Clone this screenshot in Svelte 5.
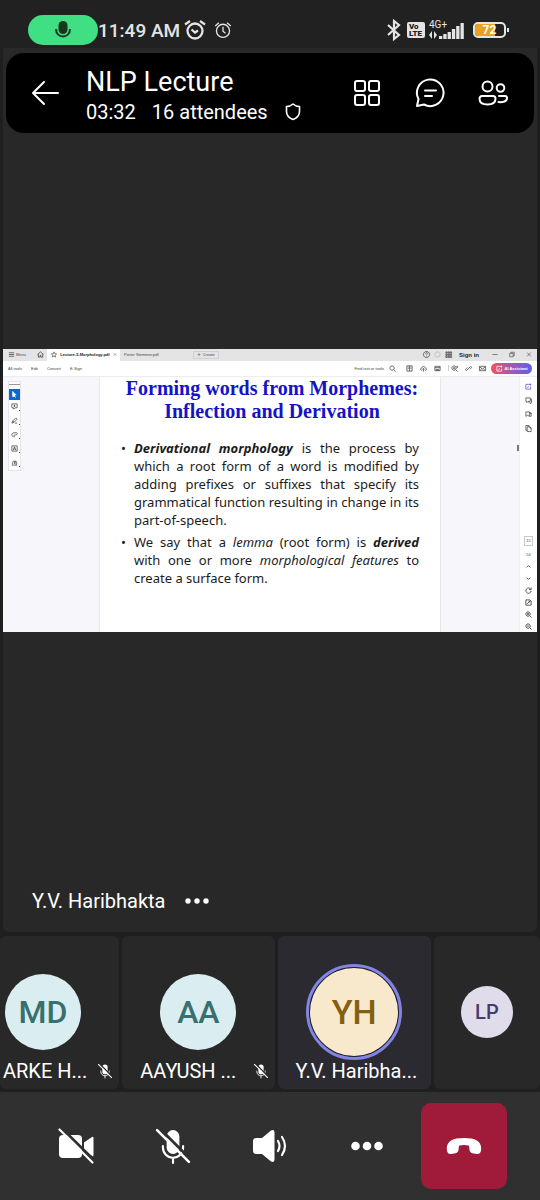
<script>
  const leftMenu = ['All tools', 'Edit', 'Convert', 'E-Sign'];
  const palette = ['comment', 'pen', 'loop', 'textbox', 'stamp'];
  const railTop = ['spark', 'chats', 'bookmark', 'pages'];
  const railBottom = ['up', 'down', 'rotate', 'fit', 'zoomin', 'zoomout'];
  const bars = [3, 5, 7, 10, 13, 16];

  const tiny = {
    menu: 'M2 4h12M2 8h12M2 12h12',
    home: 'M1 8 8 2l7 6M3 7v7h4v-4h2v4h4V7',
    star: 'M8 1l2 5 5 .4-4 3.4 1.300 5L8 12l-4.300 2.800 1.300-5-4-3.400 5-.4z',
    close: 'M3 3l10 10M13 3 3 13',
    plus: 'M8 2v12M2 8h12',
    help: 'M8 1a7 7 0 1 0 .01 0zM6 6c0-3 4-3 4-.5S8 8 8 9.500M8 11v1.500',
    bell: 'M8 2a6 6 0 1 0 .01 0z',
    apps: 'M2 2h3v3H2zM7 2h3v3H7zM12 2h3v3h-3zM2 7h3v3H2zM7 7h3v3H7zM12 7h3v3h-3zM2 12h3v3H2zM7 12h3v3H7zM12 12h3v3h-3z',
    minus: 'M1 8h14',
    restore: 'M2 5h9v9H2zM5 5V2h9v9h-3',
    search: 'M7 2a5 5 0 1 0 .01 0zM11 11l4 4',
    save: 'M2 2h12v12H2zM8 2v12M4 5h2M4 8h2M10 5h2M10 8h2',
    cloud: 'M5 12H3C0 11 1 7 4 7c0-5 8-5 8 0 4 0 4 5 1 5h-2M8 15V8M5.500 10 8 7.500 10.500 10',
    print: 'M2 3h12v10H2zM2 6h12M4 10h8M4 12h8',
    find: 'M7 2a5 5 0 1 0 .01 0zM7 5v5M5 7h5M11 11l4 4M12 3h3v4',
    link: 'M7 9 4 12c-2 2-4-1-2-3l3-3M9 7l3-3c2-2 4 1 2 3l-3 3M6 10l4-4',
    mail: 'M1 3h14v10H1zM1 4l7 5 7-5M3 12l3-4M13 12l-3-4',
    spark: 'M9 3H2v11h11V8M5 11l4-3M12 1v5M9.500 3.500h5',
    chats: 'M2 2h10v8H7l-3 3v-3H2zM12 5h3v8h-2v2l-3-2H8',
    bookmark: 'M2 2h8v10l-4-2-4 2zM10 4h4v8h-4M12 6h3',
    pages: 'M5 4h6l3 3v8H5zM11 4v3h3M5 12H2V1h7v3',
    comment: 'M2 2h12v9H9l-3 3v-3H2zM8 4v5M6 6.500h4',
    pen: 'M2 14l2-5 7-7 3 3-7 7zM4 9l3 3M9 14h5',
    loop: 'M5 12c-5 0-4-8 2-8h5c4 0 3 5-2 5-4 0-6 5-1 4',
    textbox: 'M2 2h12v12H2zM5 12l3-8 3 8M6 9h4',
    stamp: 'M2 14h12M3 13c0-4 2-9 4-9s2 5 0 7M9 12V5c4-1 5 3 2 4 4 0 3 4 0 4',
    up: 'M4 10l4-4 4 4',
    down: 'M4 6l4 4 4-4',
    rotate: 'M13 5a6 6 0 1 0 1 4M14 1v5H9',
    fit: 'M2 2h9l3 3v9H2zM5 11l6-6M8 5h3v3',
    zoomin: 'M7 2a5 5 0 1 0 .01 0zM11 11l4 4M7 4.500v5M4.500 7h5',
    zoomout: 'M7 2a5 5 0 1 0 .01 0zM11 11l4 4M4.500 7h5'
  };
</script>

{#snippet t(name)}
  <svg class="t" viewBox="0 0 16 16" aria-hidden="true"><path d={tiny[name]} /></svg>
{/snippet}

{#snippet mutedMic()}
  <svg viewBox="0 0 32 32" aria-hidden="true">
    <path class="fill" d="M10 7a6 6 0 0 1 12 0v10.500a6 6 0 0 1-12 0z" />
    <path d="M6.500 16v1.500a9.500 9.500 0 0 0 19 0V16M16 27v5" stroke-width="2" />
    <path class="cut" d="M3 -1 33 29" />
    <path d="M1 1 31 31" stroke-width="2.400" />
  </svg>
{/snippet}

<div class="app">
  <div class="status">
    <span class="pill">
      <svg width="20" height="20" viewBox="0 0 20 20"><rect x="5.500" y="1" width="9" height="13" rx="4.500" fill="#17351f" /><path d="M3 9c0 10 14 10 14 0" fill="none" stroke="#17351f" stroke-width="2" /></svg>
    </span>
    <span class="time">11:49 AM</span>
    <svg class="alarm" width="22" height="22" viewBox="0 0 22 22"><circle cx="11" cy="12" r="7.500" stroke-width="2.300" /><path d="M1 5.500 6 2M21 5.500 16 2M7.500 10.500l3.500 3 3-2" stroke-width="2.200" /></svg>
    <svg class="alarm thin" width="18" height="18" viewBox="0 0 22 22"><circle cx="11" cy="12" r="8" /><path d="M1.500 6 6 2M20.500 6 16 2M11 7v5.500l3 2.500" /></svg>
    <span class="grow"></span>
    <svg class="bt" width="14" height="20" viewBox="0 0 14 20"><path d="M1 5l11 10-5 4V1l5 4L1 15" /></svg>
    <span class="volte"><span>Vo</span><span>LTE</span></span>
    <span class="signal">
      <small>4G+</small>
      <svg width="36" height="17" viewBox="0 0 36 17">
        <path d="M0 13l3-4v8M8 13l-3 4V9" fill="#e4e4e4" />
        {#each bars as h, i}<rect x={10 + i * 4.300} y={17 - h} width="3.300" height={h} fill="#e4e4e4" />{/each}
      </svg>
    </span>
    <span class="battery"><span>72</span></span>
  </div>

  <main class="stage">
    <header>
      <button class="back" aria-label="Back"><svg width="28" height="26" viewBox="0 0 28 26"><path d="M26 13H1M12 2 1 13l11 11" /></svg></button>
      <div class="heading">
        <h1>NLP Lecture</h1>
        <p><span>03:32</span><span>16 attendees</span>
          <svg width="18" height="20" viewBox="0 0 18 20"><path d="M9 2c2 1.800 4 2.500 6.500 2.500v5c0 4.500-2.500 6.500-6.500 8-4-1.500-6.500-3.500-6.500-8v-5C5 4.500 7 3.800 9 2z" /></svg>
        </p>
      </div>
      <nav>
        <button aria-label="Gallery view"><svg width="30" height="30" viewBox="0 0 30 30"><rect x="3" y="3" width="10" height="10" rx="2" /><rect x="17" y="3" width="10" height="10" rx="2" /><rect x="3" y="17" width="10" height="10" rx="2" /><rect x="17" y="17" width="10" height="10" rx="2" /></svg></button>
        <button aria-label="Chat"><svg width="30" height="30" viewBox="0 0 30 30"><path d="M2 28l1.500-7A13.300 13.300 0 1 1 9 26.500zM10 12.500h11M10 18h7" /></svg></button>
        <button aria-label="People"><svg width="30" height="30" viewBox="0 0 30 30"><circle cx="9.500" cy="8.500" r="5" /><circle cx="22.500" cy="10" r="3.800" /><path d="M4 18h11a2.500 2.500 0 0 1 2.500 2.500c0 4-3.500 6-8 6s-8-2-8-6A2.500 2.500 0 0 1 4 18zM21 18h6a2 2 0 0 1 2 2c0 3.500-4 4.500-8.500 4" /></svg></button>
      </nav>
    </header>

    <section class="screen">
      <div class="tabs">
        <span class="menu">{@render t('menu')} Menu</span>
        {@render t('home')}
        <span class="tab">{@render t('star')}<b>Lecture-5-Morphology.pdf</b>{@render t('close')}</span>
        <span class="tab2">Porter Stemmer.pdf</span>
        <span class="create">{@render t('plus')} Create</span>
        <span class="grow"></span>
        <span class="win">{@render t('help')}{@render t('bell')}{@render t('apps')}<b>Sign in</b></span>
        <span class="ctl">{@render t('minus')}{@render t('restore')}{@render t('close')}</span>
      </div>
      <div class="tools">
        {#each leftMenu as m}<span>{m}</span>{/each}
        <span class="grow"></span>
        <span>Find text or tools</span>
        <span class="acts">{@render t('search')}<i></i>{@render t('save')}{@render t('cloud')}{@render t('print')}<u></u>{@render t('find')}{@render t('link')}{@render t('mail')}</span>
        <span class="ai">{@render t('spark')} AI Assistant</span>
      </div>
      <div class="doc">
        <div class="side">
          <div class="palette">
            <hr />
            <span class="sel"><svg viewBox="0 0 12 12" width="9" height="9"><path d="M3 1l6 6H6.500L8 11 6 9 3 9z" fill="#fff" /></svg></span>
            {#each palette as p}<span class="cell">{@render t(p)}</span>{/each}
          </div>
        </div>
        <article>
          <h2>Forming words from Morphemes:<br />Inflection and Derivation</h2>
          <ul>
            <li>
              <span class="ln"><b><em>Derivational morphology</em></b> is the process by</span>
              <span class="ln">which a root form of a word is modified by</span>
              <span class="ln">adding prefixes or suffixes that specify its</span>
              <span class="ln">grammatical function resulting in change in its</span>
              <span class="ln end">part-of-speech.</span>
            </li>
            <li>
              <span class="ln">We say that a <em>lemma</em> (root form) is <b><em>derived</em></b></span>
              <span class="ln">with one or more <em>morphological features</em> to</span>
              <span class="ln end">create a surface form.</span>
            </li>
          </ul>
        </article>
        <div class="gutter"><i></i></div>
        <div class="rail">
          <div class="top">{#each railTop as r}{@render t(r)}{/each}</div>
          <div class="bottom"><span class="pg">15</span><span>54</span>{#each railBottom as r}{@render t(r)}{/each}</div>
        </div>
      </div>
    </section>

    <div class="presenter">
      <span>Y.V. Haribhakta</span>
      <button aria-label="More about presenter"><svg width="24" height="8" viewBox="0 0 24 8"><circle cx="3" cy="4" r="2.700" /><circle cx="12" cy="4" r="2.700" /><circle cx="21" cy="4" r="2.700" /></svg></button>
    </div>
  </main>

  <div class="strip">
    <div class="tile first"><div class="ring"><span class="avatar teal">MD</span></div><div class="label"><span>ARKE H...</span>{@render mutedMic()}</div></div>
    <div class="tile"><div class="ring"><span class="avatar teal">AA</span></div><div class="label"><span>AAYUSH ...</span>{@render mutedMic()}</div></div>
    <div class="tile active"><div class="ring on"><span class="avatar gold">YH</span></div><div class="label"><span>Y.V. Haribha...</span></div></div>
    <div class="tile"><div class="ring"><span class="avatar small">LP</span></div></div>
  </div>

  <footer>
    <button aria-label="Turn camera on">
      <svg width="36" height="36" viewBox="0 0 36 36"><rect class="fill" x="1" y="7" width="23" height="23" rx="4" /><path class="fill" d="M26 14.500l8-5.500q1.500-.8 1.500 1v17q0 1.800-1.500 1l-8-5.500z" /><path class="cut" d="M3.500 0 37 33" /><path d="M1.500 1.500 34.500 34.500" stroke-width="2.200" /></svg>
    </button>
    <button aria-label="Unmute"><span class="mic">{@render mutedMic()}</span></button>
    <button aria-label="Speaker">
      <svg width="36" height="32" viewBox="0 0 36 32"><path class="fill" d="M1 11.500q0-3.500 3.500-3.500H10l9-7.500Q22.500-1 22.500 2.500v27q0 3.500-3.500 2L10 24H4.500Q1 24 1 20.500z" /><path d="M26 11q3 5 0 10M30 7q6 9 0 18" stroke-width="2.200" /></svg>
    </button>
    <button aria-label="More options"><svg width="32" height="10" viewBox="0 0 32 10"><circle class="fill" cx="4.500" cy="5" r="4.300" /><circle class="fill" cx="16" cy="5" r="4.300" /><circle class="fill" cx="27.500" cy="5" r="4.300" /></svg></button>
    <button class="end" aria-label="Leave call">
      <svg width="36" height="18" viewBox="0 0 36 18"><path class="fill" d="M18 1C29 1 35.500 4 35.200 12c-.2 4-1.700 5.500-4.700 5l-4-.7c-2-.4-2.800-1.500-3-3.500l-.5-4c-3-1-7-1-10 0l-.5 4c-.2 2-1 3.100-3 3.500l-4 .7c-3 .5-4.500-1-4.700-5C.5 4 7 1 18 1z" /></svg>
    </button>
  </footer>
</div>

<style>
  :global(body) { margin: 0; background: #1f1f1f; }
  .app { min-height: 100vh; display: flex; flex-direction: column; font-family: Roboto, sans-serif; color: #fff; overflow: hidden; }
  .app :global(*) { box-sizing: border-box; }
  svg { display: block; flex: none; overflow: visible; }
  button { background: none; border: 0; padding: 0; color: inherit; font: inherit; display: flex; align-items: center; justify-content: center; }
  h1, h2, p, ul { margin: 0; padding: 0; font-weight: 400; }
  .grow { flex: 1; }

  .status { height: 48px; padding: 12px 31px 0 28px; display: flex; align-items: center; background: #212121; color: #e4e4e4; }
  .pill { width: 70px; height: 30px; border-radius: 15px; background: #40df84; display: grid; place-items: center; }
  .time { font-size: 19px; font-weight: 500; white-space: nowrap; }
  .alarm { margin-left: 4px; fill: none; stroke: #e4e4e4; }
  .thin { margin-left: 8px; stroke-width: 1.600; }
  .bt { fill: none; stroke: #e4e4e4; stroke-width: 2.200; }
  .volte { width: 18px; height: 16px; margin: 0 4px 0 6px; border-radius: 2px; background: #e4e4e4; color: #212121; font-size: 8px; line-height: 7px; font-weight: 900; padding: 1px 2px; display: flex; flex-direction: column; }
  .signal { position: relative; }
  .signal small { position: absolute; left: 0; top: -2px; font-size: 10px; line-height: 10px; }
  .battery { position: relative; width: 33px; height: 16px; margin: 0 3px 0 8px; border: 2px solid #e4e4e4; border-radius: 5px; font-size: 12px; line-height: 12px; font-weight: 700; text-align: center; color: #fff; background: linear-gradient(90deg, #eca01f 70%, #212121 70%); background-clip: padding-box; }
  .battery::after { content: ''; position: absolute; right: -5px; top: 4px; width: 2px; height: 4px; background: #e4e4e4; }

  .stage { flex: 1; margin: 0 3px; background: #282828; border-radius: 0 0 6px 6px; display: grid; grid-template-rows: 1fr auto 1fr; }
  header { margin: 5px 3px 0; height: 80px; padding: 0 26px; background: #000; border-radius: 18px; display: flex; align-items: center; align-self: start; }
  header svg { fill: none; stroke: #fff; stroke-width: 2; stroke-linecap: round; stroke-linejoin: round; }
  .heading { flex: 1; margin-left: 26px; padding-top: 5px; }
  h1 { font-size: 27px; line-height: 32px; }
  .heading p { display: flex; align-items: center; gap: 16px; font-size: 20px; line-height: 28px; }
  .heading p svg { stroke-width: 1.600; }
  nav { display: flex; gap: 33px; }

  .screen { background: #fff; color: #444; font-family: "Liberation Sans", sans-serif; font-size: 5px; }
  .t { width: 7px; height: 7px; fill: none; stroke: #444; stroke-width: 1.700; }
  .tabs { height: 12px; background: #e4e4e6; display: flex; align-items: center; padding: 0 5px; white-space: nowrap; }
  .menu { display: flex; align-items: center; gap: 1px; margin-right: 4px; font-size: 4px; width: 25px; }
  .tab { height: 12px; width: 73px; margin-left: 3px; padding: 0 3px 0 4px; background: #fff; display: flex; align-items: center; justify-content: space-between; color: #222; font-size: 4px; }
  .tab .t:last-child { width: 4px; }
  .tab .t:first-child { width: 6px; }
  .tab2 { margin-left: 4px; font-size: 4px; }
  .create { margin-left: 34px; height: 8px; padding: 0 3px; border: 1px solid #d0d0d2; display: flex; align-items: center; gap: 2px; font-size: 4px; }
  .create .t { width: 4px; }
  .win { display: flex; align-items: center; gap: 4px; color: #222; }
  .win b { margin-left: 3px; font-size: 6px; }
  .win .t:nth-child(2) { opacity: .3; }
  .ctl { display: flex; gap: 11px; margin-left: 13px; }
  .ctl .t { width: 6px; }
  .tools { height: 16px; padding: 0 5px; display: flex; align-items: center; gap: 9px; font-size: 4px; border-bottom: 1px solid #ededf0; white-space: nowrap; }
  .acts { display: flex; align-items: center; gap: 7px; margin-left: -4px; }
  .acts i { width: 0; margin-right: -4px; }
  .acts u { width: 1px; height: 6px; margin-right: -5px; background: #ccc; }
  .ai { display: flex; align-items: center; justify-content: center; gap: 2px; width: 41px; height: 11px; margin-left: -4px; border-radius: 6px; background: linear-gradient(90deg, #ee5260, #a557b4 50%, #5d61ee); color: #fff; font-weight: 700; }
  .ai .t { stroke: #fff; }

  .doc { display: flex; }
  .side { flex: 1 1 96px; background: #f7f6fa; padding: 4px 5px; }
  .palette { width: 13px; background: #fff; border: 1px solid #e6e6ea; display: flex; flex-direction: column; align-items: center; }
  hr { width: 11px; margin: 2px 0 4px; border: 0; border-top: 1px solid #999; }
  .sel { width: 11px; height: 11px; background: #0d66d0; display: grid; place-items: center; }
  .cell { height: 14px; display: grid; place-items: center; position: relative; }
  .cell::after { content: ''; position: absolute; right: -2px; bottom: 3px; width: 1px; height: 1px; background: #444; }
  article { flex: 0 0 342px; padding: 0 21px 41px 25px; border: solid #e8e8ec; border-width: 0 1px; color: #1c1c1c; }
  h2 { font: 700 20px/23px "Liberation Serif", serif; color: #1512c8; text-align: center; white-space: nowrap; display: flex; justify-content: center; }
  ul { list-style: none; margin-top: 16px; font: 13px/18px "Noto Sans", sans-serif; }
  li { position: relative; padding-left: 9px; margin-bottom: 4px; }
  li::before { content: '•'; position: absolute; left: -4px; }
  .ln { display: block; text-align: justify; text-align-last: justify; white-space: nowrap; }
  .ln.end { text-align-last: left; }
  .gutter { flex: 1 1 78px; background: #f7f6fa; display: flex; justify-content: flex-end; }
  .gutter i { width: 2px; height: 6px; margin-top: 68px; background: #777; }
  .rail { flex: 0 0 18px; display: flex; flex-direction: column; align-items: center; justify-content: space-between; padding: 6px 0 2px; border-left: 1px solid #efeef3; }
  .top, .bottom { display: flex; flex-direction: column; align-items: center; gap: 7px; }
  .top .t:first-child { stroke: #5b4fd0; }
  .bottom { gap: 5px; font-size: 4px; line-height: 7px; }
  .bottom .t { stroke-width: 2; }
  .pg { border: 1px solid #c8c8cc; width: 9px; height: 10px; line-height: 8px; text-align: center; }

  .presenter { align-self: end; display: flex; align-items: center; gap: 20px; padding: 0 29px 17px; font-size: 20px; line-height: 28px; }
  .presenter svg { fill: #fff; }

  .strip { display: grid; grid-template-columns: 119fr 152fr 153fr 106fr; gap: 3px; padding: 4px 0 3px; }
  .tile { min-width: 0; height: 153px; padding-top: 28px; background: #282828; border-radius: 6px; display: flex; flex-direction: column; align-items: center; overflow: hidden; }
  .tile.active { background: #2b2a31; }
  .ring { width: 96px; height: 96px; border-radius: 50%; display: grid; place-items: center; }
  .ring.on { border: 3px solid #8385e4; background: #1d1c28; }
  .avatar { width: 76px; height: 76px; border-radius: 50%; display: grid; place-items: center; font-size: 32px; font-weight: 500; }
  .teal { background: #daeef1; color: #38706f; }
  .gold { width: 88px; height: 88px; background: #f8e9cd; color: #835f10; font-size: 34px; }
  .small { width: 52px; height: 52px; background: #e1dcec; color: #443d69; font-size: 20px; }
  .label { align-self: stretch; display: flex; align-items: center; justify-content: space-between; padding: 0 7px 0 18px; font-size: 20px; line-height: 22px; white-space: nowrap; }
  .label svg { width: 14px; height: 14px; }
  .first { align-items: flex-start; padding-left: 3px; }
  .first .ring { margin-left: -8px; }
  .first .label { padding-left: 0; }
  .label svg, footer svg { fill: none; stroke: #fff; stroke-linecap: round; stroke-width: 2; }
  .fill { fill: #fff; stroke: none; }
  .cut { stroke: #282828; stroke-width: 3; }
  footer .cut { stroke: #303030; stroke-width: 2.600; }

  footer { height: 108px; padding: 0 33px 0 27px; background: #303030; display: flex; align-items: center; }
  footer button { flex: 1; height: 86px; }
  .mic svg { width: 34px; height: 34px; }
  footer .end { flex: 0 0 86px; margin-left: 6px; background: #9f1b39; border-radius: 10px; }
</style>
